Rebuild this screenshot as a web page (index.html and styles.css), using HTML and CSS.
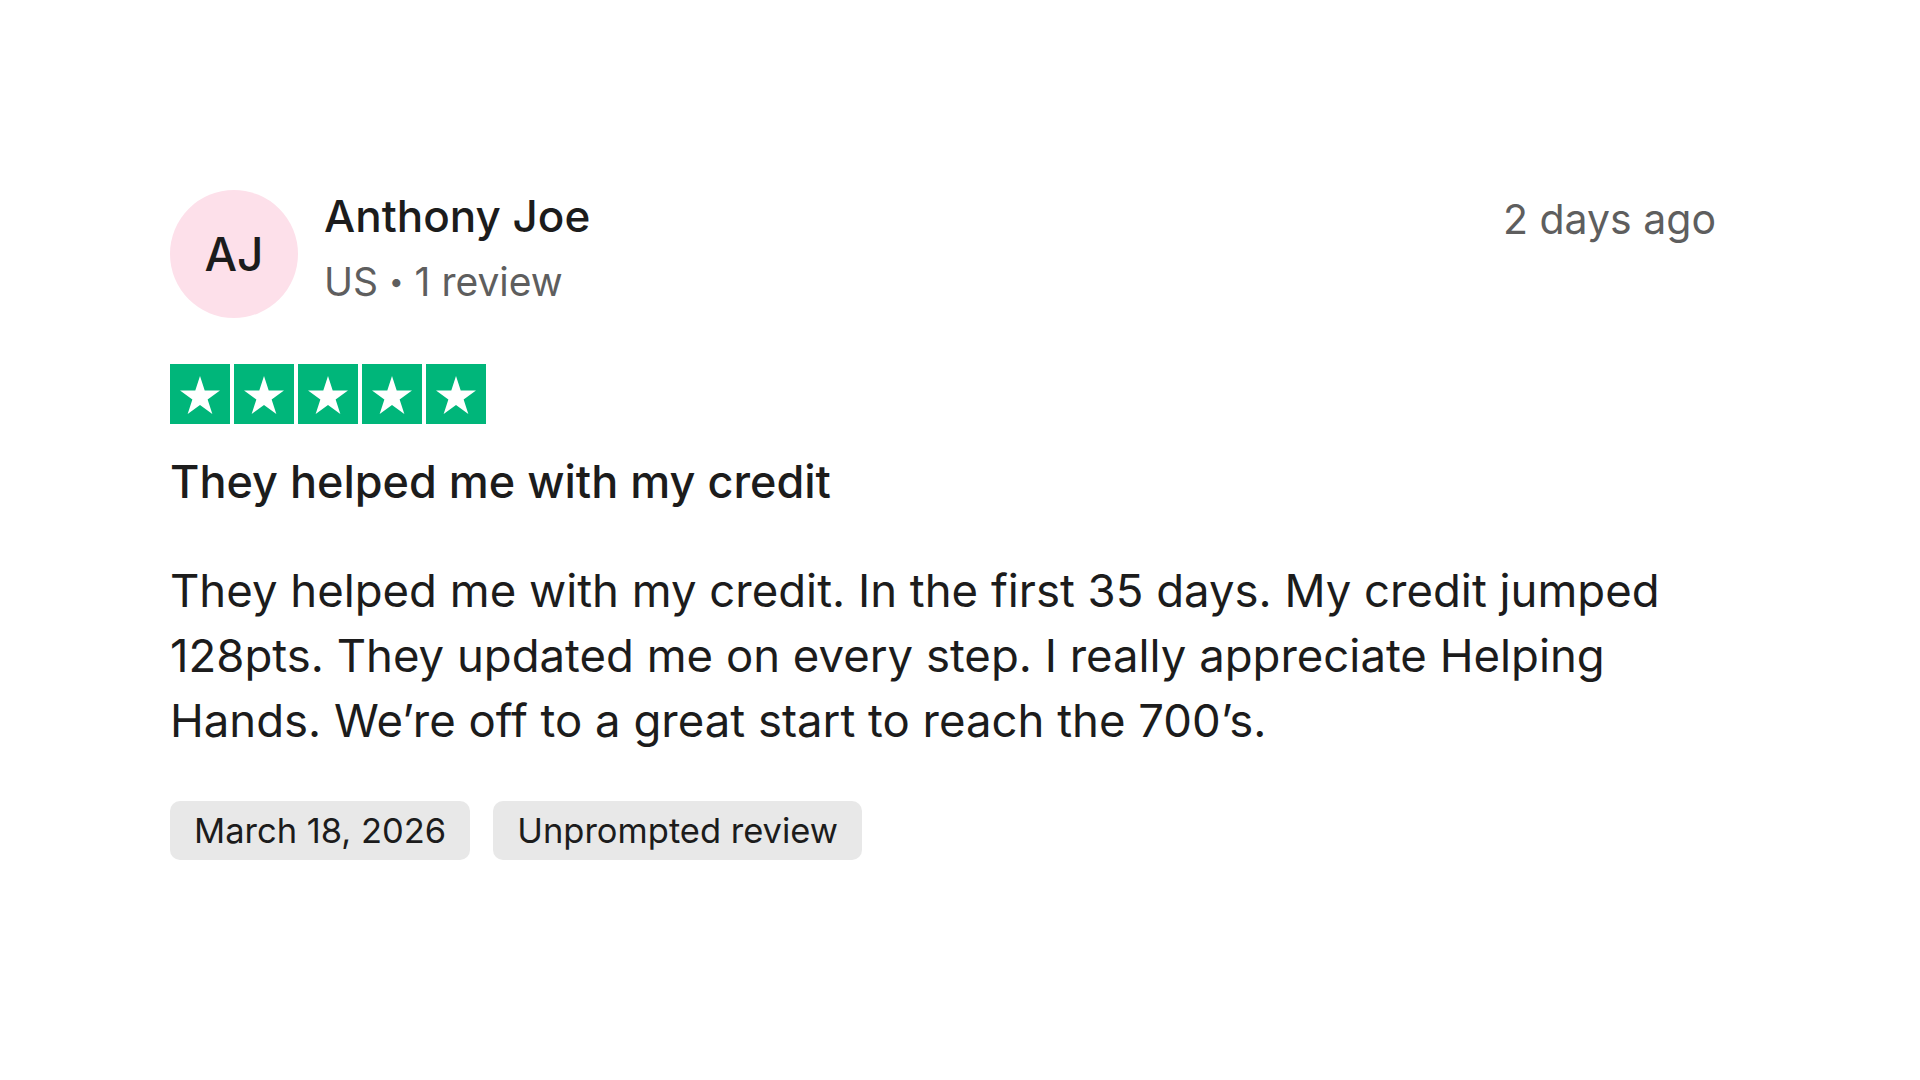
FILE: index.html
```html
<!DOCTYPE html>
<html lang="en">
<head>
<meta charset="utf-8">
<title>Review</title>
<link rel="stylesheet" href="styles.css">
</head>
<body>
<article class="review">
  <header class="review-head">
    <div class="avatar">AJ</div>
    <div class="who">
      <div class="name">Anthony Joe</div>
      <div class="meta">US <span class="dot">•</span> 1 review</div>
    </div>
    <div class="when">2 days ago</div>
  </header>
  <div class="stars">
    <span class="star"><svg viewBox="0 0 60 60"><polygon points="30,12 34.71,26.51 49.97,26.51 37.63,35.48 42.34,49.99 30,41.02 17.66,49.99 22.37,35.48 10.03,26.51 25.29,26.51"/></svg></span>
    <span class="star"><svg viewBox="0 0 60 60"><polygon points="30,12 34.71,26.51 49.97,26.51 37.63,35.48 42.34,49.99 30,41.02 17.66,49.99 22.37,35.48 10.03,26.51 25.29,26.51"/></svg></span>
    <span class="star"><svg viewBox="0 0 60 60"><polygon points="30,12 34.71,26.51 49.97,26.51 37.63,35.48 42.34,49.99 30,41.02 17.66,49.99 22.37,35.48 10.03,26.51 25.29,26.51"/></svg></span>
    <span class="star"><svg viewBox="0 0 60 60"><polygon points="30,12 34.71,26.51 49.97,26.51 37.63,35.48 42.34,49.99 30,41.02 17.66,49.99 22.37,35.48 10.03,26.51 25.29,26.51"/></svg></span>
    <span class="star"><svg viewBox="0 0 60 60"><polygon points="30,12 34.71,26.51 49.97,26.51 37.63,35.48 42.34,49.99 30,41.02 17.66,49.99 22.37,35.48 10.03,26.51 25.29,26.51"/></svg></span>
  </div>
  <h2 class="title">They helped me with my credit</h2>
  <p class="body">They helped me with my credit. In the first 35 days. My credit jumped 128pts. They updated me on every step. I really appreciate Helping Hands. We’re off to a great start to reach the 700’s.</p>
  <div class="tags">
    <span class="tag">March 18, 2026</span>
    <span class="tag">Unprompted review</span>
  </div>
</article>
</body>
</html>
```

FILE: styles.css
```css
html, body {
  margin: 0;
  padding: 0;
  background: #ffffff;
}
body {
  font-family: Inter, "Noto Sans", sans-serif;
  color: #1c1c1c;
}
.review {
  box-sizing: border-box;
  width: 1920px;
  padding: 190px 204px 0 170px;
}
.review-head {
  display: flex;
  align-items: flex-start;
}
.avatar {
  width: 128px;
  height: 128px;
  border-radius: 50%;
  background: #fde0ea;
  display: flex;
  align-items: center;
  justify-content: center;
  font-size: 46px;
  font-weight: 500;
  color: #1c1c1c;
  flex: none;
}
.who {
  margin-left: 26px;
  flex: 1;
}
.name {
  font-size: 44px;
  font-weight: 500;
  line-height: 52px;
}
.meta {
  margin-top: 16px;
  font-size: 39px;
  line-height: 48px;
  color: #5e5e5e;
}
.dot {
  font-size: 26px;
  vertical-align: 5px;
}
.when {
  font-size: 41px;
  line-height: 50px;
  color: #5e5e5e;
  padding-top: 4px;
}
.stars {
  display: flex;
  gap: 4px;
  margin-top: 46px;
}
.star {
  width: 60px;
  height: 60px;
  background: #00b67a;
  display: block;
}
.star svg {
  width: 60px;
  height: 60px;
  display: block;
  fill: #ffffff;
}
.title {
  margin: 30px 0 0;
  font-size: 45px;
  font-weight: 500;
  line-height: 56px;
}
.body {
  margin: 48px 0 0;
  font-size: 45.5px;
  line-height: 65px;
  color: #1c1c1c;
}
.tags {
  display: flex;
  gap: 23px;
  margin-top: 48px;
}
.tag {
  background: #e8e8e8;
  border-radius: 10px;
  height: 59px;
  padding: 0 24px;
  display: flex;
  align-items: center;
  font-size: 34.5px;
  color: #1c1c1c;
}
```
